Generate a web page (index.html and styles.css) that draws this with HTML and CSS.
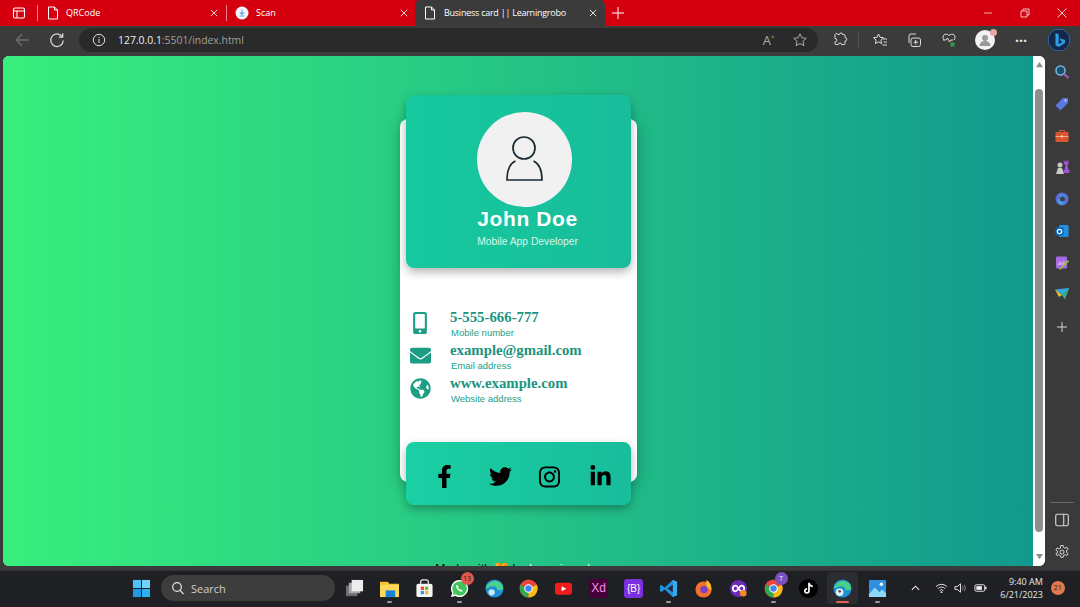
FILE: index.html
```html
<!DOCTYPE html>
<html lang="en">
<head>
<meta charset="utf-8">
<title>Business card || Learningrobo</title>
<link rel="stylesheet" href="styles.css">
</head>
<body>
<div class="tabbar">
  <svg class="ico win-ico" viewBox="0 0 14 14"><rect x="1.5" y="2" width="11" height="10" rx="1.5" fill="none" stroke="#fff" stroke-width="1.1"/><path d="M1.5 5h11M5 5v7" stroke="#fff" stroke-width="1.1"/></svg>
  <span class="tab-sep"></span>
  <div class="tab tab-a">
    <svg class="doc" viewBox="0 0 12 14"><path d="M1.5 1h6l3 3v9h-9z M7.500 1v3h3" fill="none" stroke="#fff" stroke-width="1"/></svg>
    <span class="tab-title">QRCode</span><svg class="tab-x" viewBox="0 0 8 8"><path d="M.8.8l6.400 6.400M7.200.8L.8 7.200" stroke="#f6d6d6" stroke-width="1"/></svg>
  </div>
  <span class="tab-sep"></span>
  <div class="tab tab-b">
    <svg class="doc scan" viewBox="0 0 14 14"><circle cx="7" cy="7" r="6.5" fill="#f3f6fb"/><path d="M7 3.500v4.500M5 6.500l2 2 2-2M4.500 10h5" stroke="#6aa3e0" stroke-width="1.100" fill="none"/></svg>
    <span class="tab-title">Scan</span><svg class="tab-x" viewBox="0 0 8 8"><path d="M.8.8l6.400 6.400M7.200.8L.8 7.200" stroke="#f6d6d6" stroke-width="1"/></svg>
  </div>
  <div class="tab tab-active">
    <svg class="doc" viewBox="0 0 12 14"><path d="M1.5 1h6l3 3v9h-9z M7.500 1v3h3" fill="none" stroke="#fff" stroke-width="1"/></svg>
    <span class="tab-title">Business card || Learningrobo</span><svg class="tab-x" viewBox="0 0 8 8"><path d="M.8.8l6.400 6.400M7.200.8L.8 7.200" stroke="#ddd" stroke-width="1"/></svg>
  </div>
  <svg class="newtab" viewBox="0 0 12 12"><path d="M6 0v12M0 6h12" stroke="#fff" stroke-width="1"/></svg>
  <div class="win-ctrl">
    <svg viewBox="0 0 12 12"><path d="M2 6h8" stroke="#f3b0b0" stroke-width="1"/></svg>
    <svg viewBox="0 0 12 12"><path d="M2 4h6v6H2zM4 4V2h6v6H8" fill="none" stroke="#f3c0c0" stroke-width="1"/></svg>
    <svg viewBox="0 0 12 12"><path d="M1.500 1.500l9 9M10.500 1.500l-9 9" stroke="#f6d0d0" stroke-width="1"/></svg>
  </div>
</div>

<div class="toolbar">
  <svg class="tb-ico back" viewBox="0 0 14 14"><path d="M13 7H2M7 2L2 7l5 5" fill="none" stroke="#6f6f6f" stroke-width="1.200"/></svg>
  <svg class="tb-ico reload" viewBox="0 0 14 14"><path d="M11.500 4A5.500 5.500 0 1 0 12.500 7.500M12 1v3.400H8.600" fill="none" stroke="#d8d8d8" stroke-width="1.100"/></svg>
  <div class="addr">
    <svg class="info" viewBox="0 0 14 14"><circle cx="7" cy="7" r="5.700" fill="none" stroke="#ddd" stroke-width="1"/><path d="M7 6v4M7 4v1" stroke="#ddd" stroke-width="1"/></svg>
    <span class="url"><b>127.0.0.1</b>:5501/index.html</span>
    <span class="addr-end">
      <span class="aa">A<sup>ᐞ</sup></span>
      <svg viewBox="0 0 16 16"><path d="M8 1.800l1.900 4 4.400.5-3.300 3 .9 4.400L8 11.500l-3.900 2.200.9-4.400-3.300-3 4.400-.5z" fill="none" stroke="#aaa" stroke-width="1"/></svg>
    </span>
  </div>
  <svg class="tb-ico ext" viewBox="0 0 16 16"><path d="M6 2.500h1.500a1.500 1.500 0 0 1 3 0H12a1 1 0 0 1 1 1v2a1.700 1.700 0 0 1 0 3.500v2.500a1 1 0 0 1-1 1H9.500a1.500 1.500 0 0 0-3 0H4a1 1 0 0 1-1-1V10a1.700 1.700 0 0 0 0-3.500V4a1.500 1.500 0 0 1 3-1.500z" fill="none" stroke="#ddd" stroke-width="1"/></svg>
  <span class="tb-sep"></span>
  <svg class="tb-ico fav" viewBox="0 0 16 16"><path d="M6.500 2l1.500 3.300 3.500.4-2.600 2.400.7 3.500-3.100-1.800-3.100 1.800.7-3.500L1.500 5.700 5 5.300zM11 7h4M11.500 10h3.500M10.500 13H15" fill="none" stroke="#ddd" stroke-width="1"/></svg>
  <svg class="tb-ico coll" viewBox="0 0 16 16"><rect x="5" y="6" width="9.500" height="8.500" rx="2" fill="none" stroke="#ddd"/><path d="M3 11V4a2 2 0 0 1 2-2h5M9.700 8v4.500M7.500 10.200H12" fill="none" stroke="#ddd"/></svg>
  <svg class="tb-ico health" viewBox="0 0 16 16"><path d="M3 8C0 4 4 0 8 3.500 12 0 16 4 13 8M2 8h3l1.500-2 2 4 1.500-2h2" fill="none" stroke="#ddd"/><rect x="9.500" y="10.500" width="4" height="4" fill="#2f9e44"/></svg>
  <span class="avatar"><svg viewBox="0 0 20 20"><circle cx="10" cy="10" r="10" fill="#f2f2f2"/><circle cx="10" cy="8" r="3" fill="#9a9a9a"/><path d="M4.500 16c0-3.500 2.500-5 5.500-5s5.500 1.500 5.500 5z" fill="#9a9a9a"/></svg><i class="av-dot"></i></span>
  <span class="dots">···</span>
  <span class="bing"><svg viewBox="0 0 24 24"><circle cx="12" cy="12" r="11.500" fill="#14284b"/><circle cx="12" cy="12" r="11" fill="none" stroke="#3b6d94" stroke-width="1"/><path d="M8.500 5l3.200 1.200v10l4-2.300-1.900-.9-1.100-2.800 5.300 1.800v3.100L11.700 19l-3.200-1.800z" fill="#2e9fe6"/></svg></span>
</div>

<div class="main">
  <div class="viewport">
    <div class="page">
      <div class="card">
        <div class="head">
          <div class="photo">
            <svg viewBox="0 0 95 95"><circle cx="47" cy="36" r="11" fill="none" stroke="#1b2a33" stroke-width="1.700"/><path d="M38.500 49C33 51.500 30 57.500 30 68H65C65 57.500 62 51.500 56.500 49" fill="none" stroke="#1b2a33" stroke-width="1.700"/></svg>
          </div>
          <h1 class="name">John Doe</h1>
          <p class="role">Mobile App Developer</p>
        </div>
        <div class="info-list">
          <div class="row">
            <svg class="row-ico i-phone" viewBox="0 0 320 512"><path d="M272 0H48C21.500 0 0 21.500 0 48v416c0 26.500 21.500 48 48 48h224c26.500 0 48-21.500 48-48V48c0-26.500-21.500-48-48-48zM160 480c-17.700 0-32-14.300-32-32s14.300-32 32-32 32 14.300 32 32-14.300 32-32 32zm112-108c0 6.600-5.400 12-12 12H60c-6.600 0-12-5.400-12-12V60c0-6.600 5.400-12 12-12h200c6.600 0 12 5.400 12 12v312z"/></svg>
            <div class="row-text"><div class="val">5-555-666-777</div><div class="lab">Mobile number</div></div>
          </div>
          <div class="row">
            <svg class="row-ico i-mail" viewBox="0 0 512 512"><path d="M502.300 190.800c3.900-3.100 9.700-.2 9.700 4.700V400c0 26.500-21.500 48-48 48H48c-26.500 0-48-21.500-48-48V195.600c0-5 5.700-7.800 9.700-4.700 22.400 17.400 52.100 39.500 154.100 113.600 21.100 15.400 56.700 47.800 92.200 47.600 35.700.3 72-32.800 92.300-47.600 102-74.100 131.600-96.300 154-113.700zM256 320c23.200.4 56.600-29.200 73.400-41.400 132.700-96.300 142.800-104.700 173.400-128.700 5.800-4.500 9.200-11.500 9.200-18.900v-19c0-26.500-21.500-48-48-48H48C21.500 64 0 85.500 0 112v19c0 7.400 3.400 14.300 9.200 18.900 30.600 23.900 40.700 32.400 173.400 128.700 16.800 12.200 50.200 41.800 73.400 41.400z"/></svg>
            <div class="row-text"><div class="val">example@gmail.com</div><div class="lab">Email address</div></div>
          </div>
          <div class="row">
            <svg class="row-ico i-globe" viewBox="0 0 496 512"><path d="M248 8C111.030 8 0 119.030 0 256s111.030 248 248 248 248-111.030 248-248S384.970 8 248 8zm82.290 357.600c-3.900 3.880-7.990 7.950-11.310 11.280-2.990 3-5.100 6.700-6.170 10.710-1.510 5.660-2.730 11.380-4.770 16.870l-17.390 46.850c-13.760 3-28 4.690-42.650 4.690v-27.380c1.690-12.620-7.640-36.260-22.630-51.250-6-6-9.370-14.140-9.370-22.630v-32.010c0-11.640-6.270-22.340-16.460-27.970-14.370-7.950-34.810-19.060-48.810-26.110-11.480-5.780-22.100-13.140-31.650-21.750l-.8-.72a114.792 114.792 0 0 1-18.060-20.740c-9.380-13.770-24.660-36.420-34.590-51.140 20.470-45.500 57.360-82.040 103.200-101.890l24.010 12.010C203.480 89.740 216 82.010 216 70.110v-11.300c7.990-1.290 16.120-2.110 24.390-2.420l28.300 28.300c6.250 6.250 6.250 16.380 0 22.630L264 112l-10.340 10.340c-3.120 3.120-3.120 8.190 0 11.310l4.690 4.690c3.120 3.120 3.120 8.190 0 11.310l-8 8a8.008 8.008 0 0 1-5.660 2.340h-8.990c-2.080 0-4.080.81-5.580 2.270l-9.920 9.650a8.008 8.008 0 0 0-1.580 9.310l15.590 31.190c2.660 5.320-1.210 11.580-7.150 11.580h-5.640c-1.930 0-3.790-.7-5.240-1.960l-9.280-8.060a16.017 16.017 0 0 0-15.550-3.100l-31.170 10.390a11.950 11.950 0 0 0-8.170 11.340c0 4.530 2.560 8.660 6.610 10.690l11.080 5.540c9.410 4.710 19.790 7.160 30.310 7.160s22.590 27.290 32 32h66.750c8.490 0 16.620 3.370 22.630 9.370l13.690 13.690a30.503 30.503 0 0 1 8.930 21.570 46.536 46.536 0 0 1-13.720 32.980zM417 274.250c-5.790-1.450-10.840-5-14.150-9.970l-17.980-26.970a23.970 23.970 0 0 1 0-26.620l19.590-29.380c2.320-3.470 5.500-6.290 9.240-8.150l12.980-6.490C440.200 193.590 448 223.870 448 256c0 8.670-.74 17.160-1.820 25.540L417 274.250z"/></svg>
            <div class="row-text"><div class="val">www.example.com</div><div class="lab">Website address</div></div>
          </div>
        </div>
        <div class="social">
          <svg class="s-f" viewBox="0 0 320 512"><path d="M279.140 288l14.220-92.660h-88.910v-60.130c0-25.350 12.420-50.060 52.240-50.060h40.420V6.260S260.430 0 225.360 0c-73.220 0-121.080 44.380-121.080 124.720v70.620H22.890V288h81.390v224h100.170V288z"/></svg>
          <svg class="s-t" viewBox="0 0 512 512"><path d="M459.370 151.716c.325 4.548.325 9.097.325 13.645 0 138.720-105.583 298.558-298.558 298.558-59.452 0-114.680-17.219-161.137-47.106 8.447.974 16.568 1.299 25.340 1.299 49.055 0 94.213-16.568 130.274-44.832-46.132-.975-84.792-31.188-98.112-72.772 6.498.974 12.995 1.624 19.818 1.624 9.421 0 18.843-1.300 27.614-3.573-48.081-9.747-84.143-51.980-84.143-102.985v-1.299c13.969 7.797 30.214 12.670 47.431 13.319-28.264-18.843-46.781-51.005-46.781-87.391 0-19.492 5.197-37.360 14.294-52.954 51.655 63.675 129.300 105.258 216.365 109.807-1.624-7.797-2.599-15.918-2.599-24.040 0-57.828 46.782-104.934 104.934-104.934 30.213 0 57.502 12.670 76.670 33.137 23.715-4.548 46.456-13.320 66.599-25.340-7.798 24.366-24.366 44.833-46.132 57.827 21.117-2.273 41.584-8.122 60.426-16.243-14.292 20.791-32.161 39.308-52.628 54.253z"/></svg>
          <svg class="s-i" viewBox="0 0 448 512"><path d="M224.100 141c-63.600 0-114.900 51.300-114.900 114.900s51.300 114.900 114.900 114.900S339 319.500 339 255.900 287.700 141 224.100 141zm0 189.600c-41.100 0-74.700-33.500-74.700-74.700s33.500-74.700 74.700-74.700 74.700 33.500 74.700 74.700-33.600 74.700-74.700 74.700zm146.400-194.300c0 14.900-12 26.800-26.800 26.800-14.900 0-26.800-12-26.800-26.800s12-26.800 26.800-26.800 26.800 12 26.800 26.800zm76.100 27.200c-1.700-35.900-9.900-67.700-36.200-93.900-26.200-26.200-58-34.400-93.900-36.200-37-2.100-147.900-2.100-184.900 0-35.800 1.700-67.600 9.900-93.900 36.100s-34.400 58-36.200 93.900c-2.100 37-2.100 147.900 0 184.900 1.700 35.900 9.900 67.700 36.200 93.900s58 34.400 93.900 36.200c37 2.100 147.900 2.100 184.900 0 35.900-1.700 67.700-9.900 93.900-36.200 26.200-26.200 34.400-58 36.200-93.900 2.100-37 2.100-147.800 0-184.800zM398.800 388c-7.800 19.600-22.900 34.700-42.600 42.600-29.500 11.700-99.500 9-132.100 9s-102.700 2.600-132.100-9c-19.600-7.800-34.700-22.900-42.600-42.600-11.700-29.500-9-99.500-9-132.100s-2.600-102.700 9-132.100c7.800-19.600 22.900-34.700 42.600-42.600 29.500-11.700 99.500-9 132.100-9s102.700-2.600 132.100 9c19.600 7.800 34.700 22.900 42.600 42.600 11.700 29.500 9 99.500 9 132.100s2.700 102.700-9 132.100z"/></svg>
          <svg class="s-l" viewBox="0 0 448 512"><path d="M100.280 448H7.400V148.900h92.880zM53.790 108.100C24.090 108.100 0 83.500 0 53.800a53.790 53.790 0 0 1 107.580 0c0 29.700-24.100 54.300-53.790 54.300zM447.900 448h-92.680V302.400c0-34.700-.7-79.200-48.290-79.200-48.290 0-55.690 37.700-55.690 76.700V448h-92.780V148.900h89.080v40.800h1.300c12.400-23.500 42.690-48.300 87.880-48.300 94 0 111.280 61.900 111.280 142.300V448z"/></svg>
        </div>
      </div>
      <p class="made">Made with 🧡 by <span class="made-name">Learningrobo</span></p>
    </div>
    <div class="scrollbar">
      <svg class="arrow" viewBox="0 0 10 8"><path d="M5 1l4 6H1z" fill="#8e8e8e"/></svg>
      <div class="thumb"></div>
      <svg class="arrow" viewBox="0 0 10 8"><path d="M5 7L1 1h8z" fill="#8e8e8e"/></svg>
    </div>
  </div>
  <div class="sidebar">
    <svg viewBox="0 0 16 16"><circle cx="6.500" cy="6.500" r="4.500" fill="#1d4f6a" stroke="#6db7d8" stroke-width="1.600"/><path d="M10 10l4.500 4" stroke="#a65cc8" stroke-width="2"/></svg>
    <svg viewBox="0 0 16 16"><path d="M1.500 9.500L9 2h5v5l-7.500 7.500z" fill="#5a78e0"/><circle cx="11.500" cy="4.500" r="1" fill="#dfe7ff"/></svg>
    <svg viewBox="0 0 16 16"><path d="M5.500 4V2.500h5V4" fill="none" stroke="#e0563a"/><rect x="1.500" y="4" width="13" height="10" rx="1" fill="#d9552f"/><path d="M1.500 8.500h13" stroke="#f3a580"/><rect x="7" y="7.500" width="2" height="2" fill="#f7d0b8"/></svg>
    <svg viewBox="0 0 16 16"><circle cx="6" cy="6" r="2.500" fill="#c9c9c9"/><path d="M2 15l1-3 1-3h4l1 3 1 3z" fill="#c9c9c9"/><path d="M9.500 1.500h1v1h1v-1h1v1h1v-1h1V5l-1 1 1 5h1v3h-6v-3h1l1-5-1.500-1z" fill="#a450d8"/></svg>
    <svg viewBox="0 0 16 16"><circle cx="8" cy="8" r="6.500" fill="#5b6fdc"/><path d="M4.500 2.500L12 6l-4 1.500-1.500-2zM4 8l7 1.500L8 14 4 12z" fill="#3fa0e8"/><circle cx="8.500" cy="8" r="2.500" fill="#39424a"/></svg>
    <svg viewBox="0 0 16 16"><rect x="5" y="2" width="9.500" height="12" rx="1" fill="#1f8fe0"/><rect x="1.500" y="4.500" width="8" height="8" rx="1" fill="#0b62b8"/><circle cx="5.500" cy="8.500" r="2.200" fill="none" stroke="#fff" stroke-width="1.200"/></svg>
    <svg viewBox="0 0 16 16"><rect x="2" y="1.500" width="11" height="12" rx="1" fill="#a76ae0"/><path d="M3 10l3-4 2 2 2-3 2 5z" fill="#d39be8"/><path d="M5 14l9-9 1 1.500-9 8.500z" fill="#8cc63f"/></svg>
    <svg viewBox="0 0 16 16"><path d="M1 3.500L15 2l-4 11-3-4z" fill="#38a7e0"/><path d="M1 3.500L8 9l-3 2z" fill="#f0c020"/><path d="M8 9l7-7-4 11z" fill="#2fb57a"/></svg>
    <svg class="plus" viewBox="0 0 12 12"><path d="M6 1v10M1 6h10" stroke="#d5d5d5" stroke-width="1"/></svg>
    <div class="side-end">
      <span class="side-line"></span>
      <svg viewBox="0 0 14 14"><rect x="1.500" y="2" width="11" height="10" rx="1.500" fill="none" stroke="#d5d5d5"/><path d="M8.500 2v10" stroke="#d5d5d5"/></svg>
      <svg viewBox="0 0 16 16"><path d="M6.800 1.500h2.400l.4 2 1.500.7 1.800-1 1.200 2-1.600 1.300v1.800l1.600 1.300-1.200 2-1.800-1-1.500.7-.4 2H6.800l-.4-2-1.500-.7-1.800 1-1.200-2L3.500 8.900V7.100L1.900 5.800l1.200-2 1.800 1 1.500-.7z" fill="none" stroke="#d5d5d5"/><circle cx="8" cy="8" r="2" fill="none" stroke="#d5d5d5"/></svg>
    </div>
  </div>
</div>

<div class="taskbar">
  <svg class="tk-win" viewBox="0 0 20 20"><path d="M1 1h8.500v8.500H1z" fill="#4fc3f7"/><path d="M10.500 1H19v8.500h-8.500z" fill="#6fd3fb"/><path d="M1 10.500h8.500V19H1z" fill="#1e9be0"/><path d="M10.500 10.500H19V19h-8.500z" fill="#2fb0ee"/></svg>
  <div class="search">
    <svg viewBox="0 0 14 14"><circle cx="6" cy="6" r="4.300" fill="none" stroke="#e6e6e6" stroke-width="1.200"/><path d="M9 9.300L12.500 13" stroke="#e6e6e6" stroke-width="1.200"/></svg>
    <span>Search</span>
  </div>
  <div class="apps">
    <span class="app"><svg viewBox="0 0 20 20"><rect x="1" y="7" width="12" height="11" fill="#6e6e6e"/><rect x="4" y="4" width="12" height="11" fill="#a8a8a8"/><rect x="7" y="1" width="12" height="12" fill="#ececec"/></svg></span>
    <span class="app open"><svg viewBox="0 0 20 20"><path d="M0 3h8l2 2h10v14H0z" fill="#f2c230"/><rect x="0" y="6" width="20" height="13" fill="#fbd75b"/><rect x="6" y="12" width="10" height="7" fill="#1782d8"/></svg></span>
    <span class="app"><svg viewBox="0 0 20 20"><path d="M6 5V3a2 2 0 0 1 2-2h4a2 2 0 0 1 2 2v2" fill="none" stroke="#e8e8e8" stroke-width="1.400"/><rect x="1.500" y="5" width="17" height="14" rx="2" fill="#f5f5f5"/><rect x="6" y="8" width="3.500" height="3.500" fill="#e8502f"/><rect x="10.500" y="8" width="3.500" height="3.500" fill="#7cb82f"/><rect x="6" y="12.500" width="3.500" height="3.500" fill="#2a9be0"/><rect x="10.500" y="12.500" width="3.500" height="3.500" fill="#f5b92c"/></svg></span>
    <span class="app open"><svg viewBox="0 0 20 20"><path d="M10 1a9 9 0 0 0-7.700 13.600L1 19l4.600-1.200A9 9 0 1 0 10 1z" fill="#fff"/><path d="M10 2.500a7.500 7.500 0 0 0-6.300 11.500L3 16.800l2.900-.7A7.500 7.500 0 1 0 10 2.500z" fill="#3fc55a"/><path d="M7 6c-1 1-1 3 1 5s4 3 5.500 1.500l-1.500-1.500-1 .5c-1-.5-2-1.500-2.500-2.500l.5-1z" fill="#fff"/></svg><em class="badge">13</em></span>
    <span class="app"><svg viewBox="0 0 20 20"><circle cx="10" cy="10" r="9.500" fill="#1c8fd6"/><path d="M1 9C3 3 11 0 16 4c3 2 3.500 6 2.500 7-2 1.500-6 1-6-1C12 8 9 7 6 8s-4 3-5 1z" fill="#49d18a"/><circle cx="7" cy="14" r="3.300" fill="#cfe9f5"/></svg></span>
    <span class="app"><svg viewBox="0 0 20 20"><circle cx="10" cy="10" r="9.500" fill="#e8453c"/><path d="M10 10L1.800 6A9.500 9.500 0 0 0 10 19.500L14.500 11z" fill="#2fa84f"/><path d="M10 10l8.700-4A9.500 9.500 0 0 1 10 19.500z" fill="#f9bc15"/><circle cx="10" cy="10" r="4.500" fill="#fff"/><circle cx="10" cy="10" r="3.400" fill="#4285f4"/></svg></span>
    <span class="app"><svg viewBox="0 0 20 20"><rect x="1" y="4" width="18" height="12.500" rx="3" fill="#ee1c1c"/><path d="M8 7.500l5 2.800-5 2.700z" fill="#fff"/></svg></span>
    <span class="app"><b class="tile xd">Xd</b></span>
    <span class="app"><b class="tile bs">{B}</b></span>
    <span class="app open"><svg viewBox="0 0 20 20"><path d="M14.500 1L19 3v14l-4.500 2L6 11l-3.500 2.800L1 13V7l1.500-.8L6 9z" fill="#1f8fdc"/><path d="M14.500 1v18L19 17V3z" fill="#35aaf0"/><path d="M14.500 6L9 10l5.500 4z" fill="#23252a"/></svg></span>
    <span class="app"><svg viewBox="0 0 20 20"><circle cx="10" cy="11" r="8.500" fill="#f2722c"/><path d="M13 1c4 2 6 6 5 11L13 8z" fill="#fdb92c"/><circle cx="10.500" cy="11" r="4" fill="#7d3fc4"/></svg></span>
    <span class="app"><svg viewBox="0 0 20 20"><circle cx="10" cy="10" r="9" fill="#6a2bb8"/><path d="M7 7a3 3 0 1 0 0 6c2 0 4-6 6-6a3 3 0 1 1 0 6c-2 0-4-6-6-6z" fill="none" stroke="#fff" stroke-width="1.800"/><circle cx="15" cy="15" r="3.500" fill="#f08a24"/></svg></span>
    <span class="app open"><svg viewBox="0 0 20 20"><circle cx="10" cy="10" r="9.500" fill="#e8453c"/><path d="M10 10L1.800 6A9.500 9.500 0 0 0 10 19.500L14.500 11z" fill="#2fa84f"/><path d="M10 10l8.700-4A9.500 9.500 0 0 1 10 19.500z" fill="#f9bc15"/><circle cx="10" cy="10" r="4.500" fill="#fff"/><circle cx="10" cy="10" r="3.400" fill="#4285f4"/></svg><em class="badge purple">T</em></span>
    <span class="app"><svg viewBox="0 0 20 20"><circle cx="10" cy="10" r="10" fill="#000"/><path d="M10.500 4v8.500a2.200 2.200 0 1 1-2-2.200M10.500 4c.3 2 1.700 3.500 4 3.700" fill="none" stroke="#fff" stroke-width="1.800"/></svg></span>
    <span class="app active"><svg viewBox="0 0 20 20"><circle cx="10" cy="10" r="9.500" fill="#1c8fd6"/><path d="M1 9C3 3 11 0 16 4c3 2 3.500 6 2.500 7-2 1.500-6 1-6-1C12 8 9 7 6 8s-4 3-5 1z" fill="#49d18a"/><circle cx="7" cy="14" r="4" fill="#e6f1f5"/><circle cx="7" cy="13" r="1.500" fill="#555"/></svg></span>
    <span class="app open"><svg viewBox="0 0 20 20"><rect x="1" y="1" width="18" height="18" rx="1.500" fill="#2f8fe0"/><path d="M1 16l6-7 5 5 3-3 4 4v4H1z" fill="#8fd8f8"/><circle cx="14" cy="5.500" r="1.800" fill="#fff"/></svg></span>
  </div>
  <div class="tray">
    <svg class="chev" viewBox="0 0 10 6"><path d="M1 5l4-4 4 4" fill="none" stroke="#eee" stroke-width="1.200"/></svg>
    <svg class="t-ico" viewBox="0 0 14 12"><path d="M1 4.500a8.500 8.500 0 0 1 12 0M3 6.700a5.500 5.500 0 0 1 8 0M5 8.800a2.700 2.700 0 0 1 4 0" fill="none" stroke="#eee"/><circle cx="7" cy="10.500" r="1" fill="#eee"/></svg>
    <svg class="t-ico" viewBox="0 0 14 12"><path d="M1 4.500h2.500L7 1.500v9L3.500 7.500H1z" fill="none" stroke="#eee"/><path d="M9 4a3 3 0 0 1 0 4M11 2.500a5.500 5.500 0 0 1 0 7" fill="none" stroke="#888"/></svg>
    <svg class="t-ico" viewBox="0 0 14 12"><rect x="1" y="2.500" width="10.500" height="7" rx="1.500" fill="none" stroke="#eee"/><rect x="2.500" y="4" width="6" height="4" fill="#eee"/><rect x="12" y="4.500" width="1.500" height="3" fill="#eee"/></svg>
    <div class="clock"><div>9:40 AM</div><div>6/21/2023</div></div>
    <span class="notif">21</span>
  </div>
</div>
</body>
</html>
```

FILE: styles.css
```css
* { box-sizing: border-box; }
html, body { margin: 0; padding: 0; }
body {
  width: 1080px;
  height: 607px;
  overflow: hidden;
  background: #3a3a3a;
  font-family: "Open Sans", "Liberation Sans", sans-serif;
  display: flex;
  flex-direction: column;
}

/* tab strip */
.tabbar {
  height: 26px;
  flex: none;
  background: #d4000f;
  display: flex;
  align-items: center;
  color: #fff;
}
.ico.win-ico { width: 14px; height: 14px; margin-left: 12px; flex: none; }
.tab-sep { width: 1px; height: 16px; background: #f0808a; flex: none; }
.win-ico + .tab-sep { margin-left: 11px; }
.tab { height: 26px; display: flex; align-items: center; flex: none; font-size: 9px; padding-bottom: 1px; }
.tab-a { width: 188px; padding-left: 9px; }
.tab-b { width: 188px; padding-left: 8px; }
.tab-active {
  width: 190px;
  padding-left: 9px;
  background: #3b3b3b;
  border-radius: 5px 5px 0 0;
  height: 26px;
}
.tab-active .tab-title { letter-spacing: -.25px; }
.doc { width: 12px; height: 14px; flex: none; }
.scan { width: 14px; }
.tab-title { margin-left: 8px; flex: 1; white-space: nowrap; overflow: hidden; }
.tab-a .tab-title { margin-left: 7px; }
.tab-b .tab-title { margin-left: 7px; }
.tab-x { width: 8px; height: 8px; flex: none; margin-right: 8px; }
.tab-b .tab-x { margin-right: 7px; }
.newtab { width: 12px; height: 12px; margin-left: 7px; flex: none; }
.win-ctrl { margin-left: auto; display: flex; flex: none; gap: 25px; padding-right: 12px; }
.win-ctrl svg { width: 12px; height: 12px; display: block; }

/* toolbar */
.toolbar {
  height: 30px;
  flex: none;
  background: #3b3b3b;
  display: flex;
  align-items: center;
  padding-bottom: 2px;
}
.tb-ico { width: 16px; height: 16px; flex: none; display: block; }
.back { margin-left: 14px; }
.reload { margin-left: 19px; }
.addr {
  width: 739px;
  height: 24px;
  margin-left: 14px;
  flex: none;
  border-radius: 12px;
  background: #2a2a2a;
  display: flex;
  align-items: center;
  padding: 0 10px 0 13px;
  font-size: 10.400px;
  color: #a0a0a0;
}
.info { width: 14px; height: 14px; flex: none; margin-right: 12px; }
.url b { font-weight: 400; color: #ededed; }
.addr-end { margin-left: auto; display: flex; align-items: center; gap: 18px; color: #aaa; }
.addr-end svg { width: 16px; height: 16px; display: block; }
.aa { font-size: 13px; line-height: 1; }
.aa sup { font-size: 6px; }
.ext { margin-left: 14px; }
.tb-sep { width: 1px; height: 14px; background: #555; margin-left: 10px; flex: none; }
.fav { margin-left: 13px; }
.coll { margin-left: 18px; }
.health { margin-left: 19px; }
.avatar { position: relative; width: 20px; height: 20px; margin-left: 18px; flex: none; }
.avatar svg { width: 20px; height: 20px; display: block; }
.av-dot { position: absolute; right: -2px; top: -1px; width: 7px; height: 7px; border-radius: 50%; background: #e8a8a0; }
.dots { width: 20px; margin-left: 16px; color: #e5e5e5; font-size: 14px; font-weight: 700; flex: none; text-align: center; }
.bing { width: 24px; height: 24px; margin-left: 16px; flex: none; }
.bing svg { width: 24px; height: 24px; display: block; }

/* main area */
.main { flex: none; height: 514px; display: flex; background: #3a3a3a; }
.viewport {
  width: 1042px;
  margin-left: 3px;
  height: 510px;
  display: flex;
  overflow: hidden;
  border-radius: 6px;
  background: #fff;
}
.page {
  flex: none;
  width: 1030px;
  height: 510px;
  background: linear-gradient(to right, #38ef7d, #11998e);
  display: flex;
  flex-direction: column;
  align-items: center;
  padding-top: 63px;
  overflow: hidden;
}
.card {
  width: 237px;
  height: 363px;
  margin-left: 1px;
  flex: none;
  background: #fff;
  border-radius: 8px;
  display: flex;
  flex-direction: column;
  box-shadow: 0 4px 16px rgba(0, 0, 0, .25);
}
.head {
  width: 225px;
  height: 173px;
  margin: -24px 0 0 6px;
  flex: none;
  border-radius: 8px;
  background: linear-gradient(to right, #16c99e, #18bd9b);
  box-shadow: 0 4px 10px rgba(0, 0, 0, .3);
  display: flex;
  flex-direction: column;
  align-items: center;
  padding: 17px 0 0 11px;
  color: #fff;
  font-family: "Liberation Sans", Arial, sans-serif;
}
.photo { width: 95px; height: 95px; border-radius: 50%; background: #f1f1f1; flex: none; }
.photo svg { width: 95px; height: 95px; display: block; }
.name { margin: -1px 0 0 7px; font-size: 21px; line-height: 26px; font-weight: 700; letter-spacing: .6px; }
.role { margin: 3px 0 0 7px; font-size: 10.300px; line-height: 13px; color: #d8f5ea; }

.info-list { flex: none; padding: 41px 0 0 10px; display: flex; flex-direction: column; gap: 6px; }
.row { display: flex; height: 27px; }
.row-ico { fill: #1c9d84; flex: none; display: block; }
.i-phone { width: 14px; height: 22px; margin: 3px 23px 0 3px; }
.i-mail { width: 21px; height: 21px; margin: 3px 19px 0 0; }
.i-globe { width: 21px; height: 21px; margin: 3px 19px 0 0; }
.row-text { font-family: "Liberation Sans", Arial, sans-serif; }
.val { font-family: "Liberation Serif", "Times New Roman", serif; font-weight: 700; font-size: 14.800px; line-height: 16px; color: #1a9480; }
.lab { font-size: 9.500px; line-height: 13px; margin: 1px 0 0 1px; color: #23a08a; }

.social {
  width: 225px;
  height: 63px;
  margin: auto 0 -23px 6px;
  flex: none;
  border-radius: 8px;
  background: linear-gradient(to right, #1bcfa4, #18bd9b);
  box-shadow: 0 4px 10px rgba(0, 0, 0, .3);
  display: flex;
  align-items: center;
  padding: 6px 0 0 31px;
}
.social svg { display: block; flex: none; fill: #000; height: 23px; }
.s-f { width: 15px; }
.s-t { width: 23px; margin-left: 37px; }
.s-i { width: 21px; margin-left: 27px; height: 24px !important; }
.s-l { width: 21px; margin-left: 30px; }

.made {
  margin: 79px 0 0;
  font-family: "Liberation Sans", Arial, sans-serif;
  font-size: 12.200px;
  line-height: 16px;
  color: #000;
  white-space: nowrap;
}
.made-name { color: #e8f8f2; }

.scrollbar {
  width: 12px;
  flex: none;
  background: #fff;
  display: flex;
  flex-direction: column;
  align-items: center;
  padding: 5px 0 6px;
}
.arrow { width: 9px; height: 7px; flex: none; display: block; }
.thumb { flex: 1; width: 8px; margin: 21px 0; border-radius: 4px; background: #8e8e8e; }

/* sidebar */
.sidebar {
  flex: 1;
  display: flex;
  flex-direction: column;
  align-items: center;
  padding: 8px 2px 0 0;
  gap: 15.750px;
}
.sidebar > svg { width: 16px; height: 16px; flex: none; display: block; }
.sidebar > svg.plus { width: 12px; height: 12px; margin-top: 3px; }
.side-end { margin-top: auto; display: flex; flex-direction: column; align-items: center; gap: 16px; padding-bottom: 10px; }
.side-end svg { width: 16px; height: 16px; display: block; }
.side-line { width: 24px; height: 1px; background: #666; margin-bottom: -7px; }

/* taskbar */
.taskbar {
  flex: 1;
  background: #1f2023;
  border-top: 1px solid #333;
  display: flex;
  align-items: center;
  padding-bottom: 2px;
  color: #eee;
}
.tk-win { width: 19px; height: 19px; margin-left: 132px; flex: none; }
.search {
  width: 174px;
  height: 26px;
  border-radius: 13px;
  background: #3d3d3d;
  margin-left: 10px;
  flex: none;
  display: flex;
  align-items: center;
  padding-left: 10px;
  font-size: 11px;
  color: #cfcfcf;
}
.search svg { width: 14px; height: 14px; margin-right: 6px; }
.apps { display: flex; margin-left: 2px; flex: none; }
.app {
  position: relative;
  width: 34.900px;
  height: 32px;
  display: flex;
  align-items: center;
  justify-content: center;
  flex: none;
  border-radius: 4px;
}
.app svg { width: 19px; height: 19px; display: block; }
.open::after, .active::after {
  content: "";
  position: absolute;
  bottom: 1px;
  left: 15px;
  width: 5px;
  height: 2px;
  border-radius: 1px;
  background: #9a9a9a;
}
.active { background: #2c2d30; width: 31px; margin: 0 1.950px; }
.active::after { left: 9px; width: 13px; background: #e0654f; }
.badge {
  position: absolute;
  right: 3px;
  top: 0;
  width: 13px;
  height: 13px;
  border-radius: 50%;
  background: #e2574c;
  color: #222;
  font-style: normal;
  font-size: 7px;
  line-height: 13px;
  text-align: center;
}
.badge.purple { background: #7b4fc0; color: #eee; }
.tile {
  width: 19px;
  height: 19px;
  border-radius: 3px;
  font-family: "Liberation Sans", Arial, sans-serif;
  font-weight: 400;
  display: flex;
  align-items: center;
  justify-content: center;
}
.xd { background: #47003a; color: #f58fe0; font-size: 12px; }
.bs { background: #7b2fe0; color: #fff; font-size: 10px; }
.tray { margin-left: 4px; display: flex; align-items: center; flex: 1; }
.chev { width: 9px; height: 6px; flex: none; margin-left: 12px; }
.t-ico { width: 13px; height: 12px; flex: none; margin-left: 6px; }
.chev + .t-ico { margin-left: 15px; }
.t-ico + .t-ico + .t-ico { margin-left: 7px; }
.clock { margin-left: 13px; font-size: 9px; line-height: 13px; text-align: right; flex: none; color: #e8e8e8; }
.notif {
  width: 14px;
  height: 14px;
  margin-left: 8px;
  border-radius: 50%;
  background: #e07850;
  color: #222;
  font-size: 7px;
  line-height: 14px;
  text-align: center;
  flex: none;
}
```
